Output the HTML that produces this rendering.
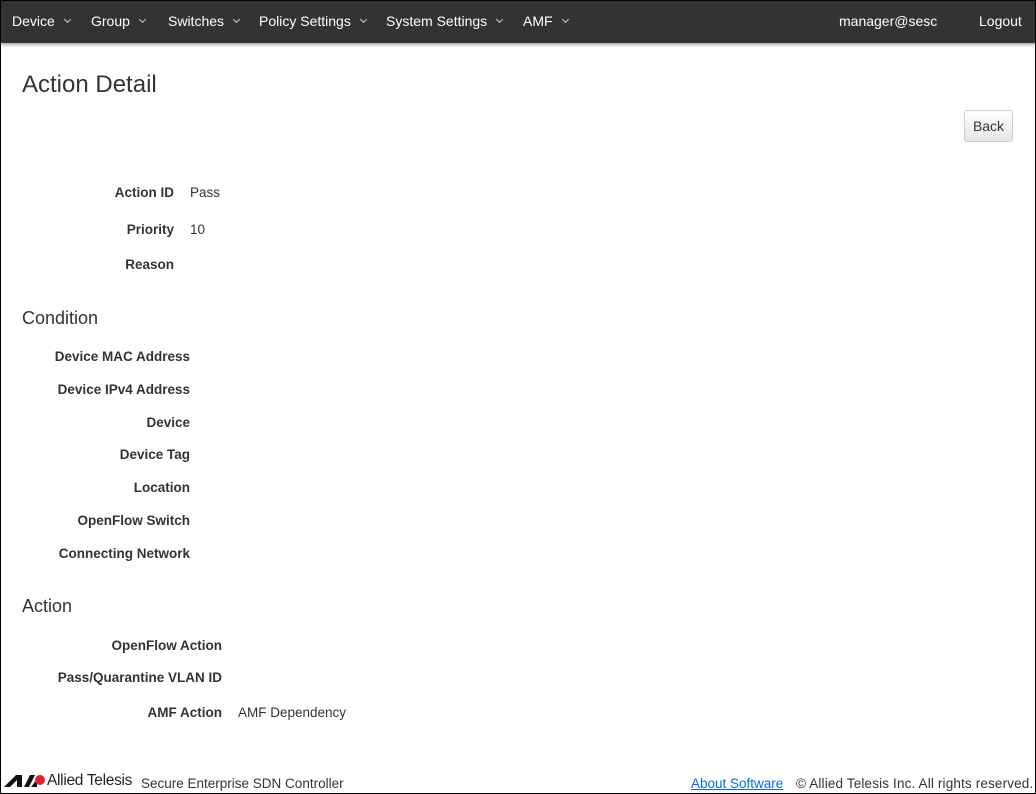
<!DOCTYPE html>
<html><head><meta charset="utf-8"><style>
*{margin:0;padding:0;box-sizing:border-box}
html,body{width:1036px;height:794px;overflow:hidden;background:#fff}
body{font-family:"Liberation Sans",sans-serif;color:#333;position:relative;border:1px solid #000}
.nav{position:absolute;left:0;top:0;width:1034px;height:42px;background:#333;box-shadow:0 2px 3px rgba(0,0,0,.35)}
.nav span{position:absolute;top:12px;color:#fff;font-size:14px;white-space:nowrap}
.nav .c{display:inline-block;width:5px;height:5px;border-right:1px solid #ccc;border-bottom:1px solid #ccc;transform:rotate(45deg);margin-left:10px;position:relative;top:-4px}
.a{position:absolute;white-space:nowrap}
.l{font-weight:bold;font-size:13.5px;color:#333;text-align:right}
.v{font-size:13.5px;color:#333}
h1{position:absolute;left:21px;top:70px;font-weight:normal;font-size:24px;color:#333}
h2{position:absolute;left:21px;font-weight:normal;font-size:18px;color:#333}
.btn{position:absolute;left:963px;top:109px;width:49px;height:32px;border:1px solid #ccc;border-radius:3px;background:linear-gradient(#fff,#e6e6e6);font-size:14px;text-align:center;line-height:30px;color:#333}
</style></head><body>
<div class="nav">
<span style="left:11px">Device<i class="c"></i></span>
<span style="left:90px">Group<i class="c"></i></span>
<span style="left:167px">Switches<i class="c"></i></span>
<span style="left:258px">Policy Settings<i class="c"></i></span>
<span style="left:385px">System Settings<i class="c"></i></span>
<span style="left:522px">AMF<i class="c"></i></span>
<span style="left:838px">manager@sesc</span>
<span style="left:978px">Logout</span>
</div>
<h1>Action Detail</h1>
<div class="btn">Back</div>

<div class="a l" style="right:861px;top:184px">Action ID</div><div class="a v" style="left:189px;top:184px">Pass</div>
<div class="a l" style="right:861px;top:221px">Priority</div><div class="a v" style="left:189px;top:221px">10</div>
<div class="a l" style="right:861px;top:256px">Reason</div>

<h2 style="top:307px">Condition</h2>
<div class="a l" style="right:845px;top:348px">Device MAC Address</div>
<div class="a l" style="right:845px;top:381px">Device IPv4 Address</div>
<div class="a l" style="right:845px;top:414px">Device</div>
<div class="a l" style="right:845px;top:446px">Device Tag</div>
<div class="a l" style="right:845px;top:479px">Location</div>
<div class="a l" style="right:845px;top:512px">OpenFlow Switch</div>
<div class="a l" style="right:845px;top:545px">Connecting Network</div>

<h2 style="top:595px">Action</h2>
<div class="a l" style="right:813px;top:637px">OpenFlow Action</div>
<div class="a l" style="right:813px;top:669px">Pass/Quarantine VLAN ID</div>
<div class="a l" style="right:813px;top:704px">AMF Action</div><div class="a v" style="left:237px;top:704px">AMF Dependency</div>

<svg class="a" style="left:3px;top:772px" width="42" height="14" viewBox="0 0 42 14">
<polygon points="0,14 12,2 18,2 18,14 13,14 13,7 6,14" fill="#111"/>
<polygon points="20,14 26,2 31,2 25,14" fill="#111"/>
<polygon points="27,14 33,6 33,14" fill="#111"/>
<circle cx="36" cy="7" r="5" fill="#e0232e"/>
</svg>
<div class="a" style="left:46px;top:771px;font-size:15.5px;color:#222;letter-spacing:-0.3px">Allied Telesis</div>
<div class="a" style="left:140px;top:775px;font-size:13.5px;color:#333">Secure Enterprise SDN Controller</div>
<div class="a" style="left:690px;top:775px;font-size:13.5px;color:#0a6bd6;text-decoration:underline">About Software</div>
<div class="a" style="left:795px;top:775px;font-size:13.5px;color:#333;letter-spacing:0.15px">© Allied Telesis Inc. All rights reserved.</div>
</body></html>
